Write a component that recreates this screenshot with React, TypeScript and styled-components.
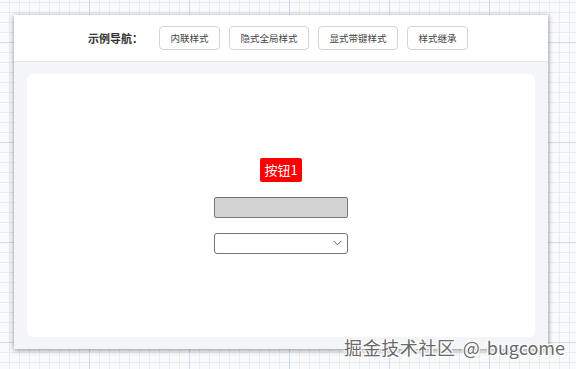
import styled, { createGlobalStyle } from "styled-components";

const GlobalStyle = createGlobalStyle`
  html, body {
    margin: 0;
    padding: 0;
  }
  body {
    width: 576px;
    height: 369px;
    overflow: hidden;
    font-family: "Noto Sans CJK SC", "Noto Sans", sans-serif;
    background-color: #f9fafc;
    background-image:
      linear-gradient(to right, #cdd8f2 1px, transparent 1px),
      linear-gradient(to bottom, #cdd8f2 1px, transparent 1px),
      linear-gradient(to right, #e9ebf0 1px, transparent 1px),
      linear-gradient(to bottom, #e9ebf0 1px, transparent 1px);
    background-size: 100px 100px, 100px 100px, 10px 10px, 10px 10px;
    background-position: 89px 42px, 89px 42px, 9px 2px, 9px 2px;
  }
`;

const Canvas = styled.div`
  position: relative;
  width: 576px;
  height: 369px;
  padding: 15px 0 0 14px;
  box-sizing: border-box;
`;

const Window = styled.div`
  width: 534px;
  height: 334px;
  display: flex;
  flex-direction: column;
  background: #fff;
  box-shadow: 0 1px 5px rgba(0, 0, 0, 0.45);
`;

const Header = styled.div`
  height: 46px;
  flex-shrink: 0;
  display: flex;
  align-items: center;
  justify-content: center;
  padding-right: 6px;
  border-bottom: 1px solid #e2e4e8;
`;

const NavLabel = styled.span`
  font-size: 11px;
  font-weight: 700;
  color: #333;
  margin-right: 16px;
`;

const NavList = styled.div`
  display: flex;
  gap: 9px;
`;

const NavButton = styled.button<{ w: number }>`
  width: ${({ w }) => w}px;
  height: 24px;
  padding: 0;
  border: 1px solid #d2d4d8;
  border-radius: 4px;
  background: #fff;
  font-family: "Noto Sans CJK SC", sans-serif;
  font-size: 9.5px;
  color: #444;
`;

const Body = styled.div`
  flex: 1;
  background: #f3f5f8;
  padding: 12px 13px;
  display: flex;
`;

const Card = styled.div`
  flex: 1;
  background: #fff;
  border-radius: 6px;
  display: flex;
  flex-direction: column;
  align-items: center;
  justify-content: center;
  gap: 15px;
`;

const RedButton = styled.button`
  height: 24px;
  padding: 0 4px;
  border: none;
  border-radius: 2px;
  background: #ff0000;
  color: #fff;
  font-family: "Noto Sans CJK SC", sans-serif;
  font-size: 13px;
  line-height: 24px;
`;

const GreyInput = styled.input`
  width: 134px;
  height: 21px;
  box-sizing: border-box;
  border: 1px solid #767676;
  border-radius: 2px;
  background: #d3d3d3;
  outline: none;
`;

const SelectBox = styled.div`
  width: 134px;
  height: 21px;
  box-sizing: border-box;
  border: 1px solid #767676;
  border-radius: 3px;
  background: #fff;
  display: flex;
  align-items: center;
  justify-content: flex-end;
  padding-right: 5px;
`;

const Watermark = styled.div`
  position: absolute;
  right: 11px;
  bottom: 11px;
  font-family: "Noto Sans CJK SC", sans-serif;
  font-size: 18px;
  line-height: 22px;
  word-spacing: 3px;
  color: #6a6a6a;
  text-shadow: 1px 1px 0 #fff, -1px -1px 0 #fff, 1px -1px 0 #fff, -1px 1px 0 #fff;
  white-space: nowrap;
`;

const WideChars = styled.span`
  letter-spacing: 0.6px;
`;

const navItems = [
  { label: "内联样式", w: 61 },
  { label: "隐式全局样式", w: 80 },
  { label: "显式带键样式", w: 80 },
  { label: "样式继承", w: 61 },
];

export default function App() {
  return (
    <>
      <GlobalStyle />
      <Canvas>
        <Window>
          <Header>
            <NavLabel>示例导航：</NavLabel>
            <NavList>
              {navItems.map((item) => (
                <NavButton key={item.label} w={item.w}>
                  {item.label}
                </NavButton>
              ))}
            </NavList>
          </Header>
          <Body>
            <Card>
              <RedButton>按钮1</RedButton>
              <GreyInput />
              <SelectBox>
                <svg width="9" height="6" viewBox="0 0 9 6">
                  <path
                    d="M0.5 0.8 L4.5 4.8 L8.5 0.8"
                    fill="none"
                    stroke="#555"
                    strokeWidth="1"
                  />
                </svg>
              </SelectBox>
            </Card>
          </Body>
        </Window>
        <Watermark>
          <WideChars>掘金技术社区</WideChars> @ bugcome
        </Watermark>
      </Canvas>
    </>
  );
}
